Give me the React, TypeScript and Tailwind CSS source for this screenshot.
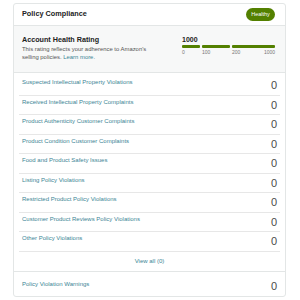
const rows = [
  'Suspected Intellectual Property Violations',
  'Received Intellectual Property Complaints',
  'Product Authenticity Customer Complaints',
  'Product Condition Customer Complaints',
  'Food and Product Safety Issues',
  'Listing Policy Violations',
  'Restricted Product Policy Violations',
  'Customer Product Reviews Policy Violations',
  'Other Policy Violations',
];

export default function App() {
  return (
    <div className="w-[300px] h-[300px] bg-white pt-[3px] pl-[13px] font-['Liberation_Sans',Arial,sans-serif]">
      <div className="w-[273px] h-[294px] border border-[#e3e6e6] rounded-[3px] flex flex-col">
        {/* header */}
        <div className="h-[22px] shrink-0 border-b border-[#e3e6e6] flex items-center justify-between pl-[8px] pr-[10px]">
          <span className="text-[7.3px] font-bold text-[#222]">Policy Compliance</span>
          <span className="h-[13px] w-[29px] rounded-full bg-[#538000] text-white text-[5.5px] flex items-center justify-center">Healthy</span>
        </div>

        {/* account health */}
        <div className="h-[47px] shrink-0 bg-[#f7f8f8] border-b border-[#e3e6e6] flex pl-[8px] pt-[9px]">
          <div className="w-[160px]">
            <div className="text-[7.2px] font-bold leading-[9px] text-[#222]">Account Health Rating</div>
            <div className="text-[5.9px] leading-[8px] text-[#555] mt-[1px]">
              This rating reflects your adherence to Amazon's<br />
              selling policies. <span className="text-[#3b8595]">Learn more.</span>
            </div>
          </div>
          <div className="w-[93px]">
            <div className="text-[7px] font-bold leading-[9px] text-[#222]">1000</div>
            <div className="flex gap-[2px] mt-[1px]">
              <div className="w-[18px] h-[3px] rounded-[1px] bg-[#538000]" />
              <div className="w-[28px] h-[3px] rounded-[1px] bg-[#538000]" />
              <div className="flex-1 h-[3px] rounded-[1px] bg-[#538000]" />
            </div>
            <div className="flex text-[5px] leading-[7px] text-[#777] mt-[1px]">
              <span className="w-[20px]">0</span>
              <span className="w-[30px]">100</span>
              <span className="flex-1">200</span>
              <span>1000</span>
            </div>
          </div>
        </div>

        {/* violation rows */}
        <div className="px-[5px] pt-[3px]">
          {rows.map(r => (
            <div key={r} className="h-[19.5px] border-b border-[#e7e7e7] flex items-start justify-between px-[3px]">
              <span className="pt-[3px] text-[6px] leading-[7px] text-[#3b8595]">{r}</span>
              <span className="text-[11px] leading-[19px] text-[#4a4a4a]">0</span>
            </div>
          ))}
          <div className="h-[19.5px] flex items-center justify-center text-[6px] text-[#3b8595]">View all (0)</div>
        </div>

        {/* warnings */}
        <div className="flex-1 border-t border-[#e3e6e6] flex items-start justify-between pl-[8px] pr-[8px]">
          <span className="pt-[9px] text-[6px] leading-[7px] text-[#3b8595]">Policy Violation Warnings</span>
          <span className="pt-[5px] text-[11px] leading-[19px] text-[#4a4a4a]">0</span>
        </div>
      </div>
    </div>
  );
}
